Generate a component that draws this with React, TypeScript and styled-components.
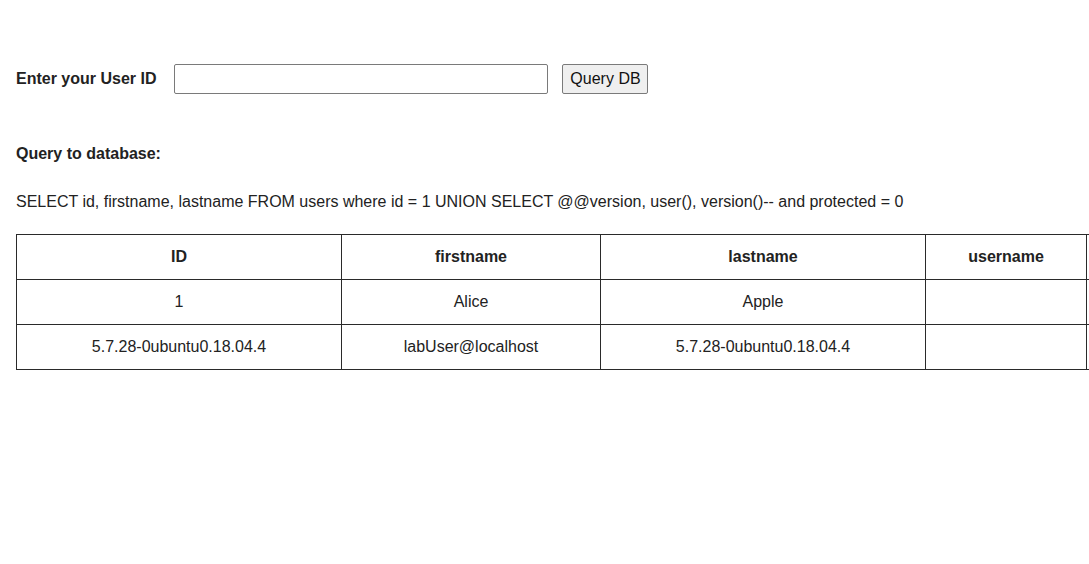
import styled, { createGlobalStyle } from "styled-components";

const GlobalStyle = createGlobalStyle`
  html, body {
    margin: 0;
    padding: 0;
    overflow: hidden;
    background: #ffffff;
  }
  body {
    font-family: "Liberation Sans", Arial, sans-serif;
    font-size: 16px;
    color: #222222;
  }
`;

const Page = styled.main`
  padding: 64px 0 0 16px;
`;

const Form = styled.form`
  display: flex;
  align-items: center;
  height: 30px;
`;

const Label = styled.label`
  font-weight: bold;
  margin-right: 18px;
`;

const Input = styled.input`
  box-sizing: border-box;
  width: 374px;
  height: 30px;
  border: 1px solid #7a7a7a;
  border-radius: 2px;
  padding: 0 6px;
  font: inherit;
  margin: 0 14px 0 0;
`;

const Button = styled.button`
  box-sizing: border-box;
  width: 86px;
  height: 30px;
  background: #efefef;
  border: 1px solid #7a7a7a;
  border-radius: 2px;
  font-family: "Liberation Sans", Arial, sans-serif;
  font-size: 16px;
  color: #111;
  padding: 0;
`;

const Heading = styled.h4`
  margin: 51px 0 0;
  font-size: 16px;
  line-height: 18px;
  font-weight: bold;
`;

const QueryText = styled.p`
  margin: 30px 0 0;
  line-height: 18px;
`;

const Table = styled.table`
  margin-top: 23px;
  border-collapse: collapse;
  table-layout: fixed;
  width: 1230px;
`;

const Cell = styled.td<{ $head?: boolean }>`
  border: 1px solid #2a2a2a;
  height: 44px;
  padding: 0;
  text-align: center;
  font-weight: ${(p) => (p.$head ? "bold" : "normal")};
`;

// last column is cut off by the window edge in the original page
const columns = [
  { name: "ID", width: 325 },
  { name: "firstname", width: 259 },
  { name: "lastname", width: 325 },
  { name: "username", width: 161 },
  { name: "", width: 160 },
];

const rows = [
  ["1", "Alice", "Apple", "", ""],
  ["5.7.28-0ubuntu0.18.04.4", "labUser@localhost", "5.7.28-0ubuntu0.18.04.4", "", ""],
];

const App = () => {
  return (
    <>
      <GlobalStyle />
      <Page>
        <Form onSubmit={(e) => e.preventDefault()}>
          <Label htmlFor="uid">Enter your User ID</Label>
          <Input id="uid" type="text" />
          <Button type="submit">Query DB</Button>
        </Form>
        <Heading>Query to database:</Heading>
        <QueryText>
          SELECT id, firstname, lastname FROM users where id = 1 UNION SELECT @@version, user(), version()-- and protected = 0
        </QueryText>
        <Table>
          <colgroup>
            {columns.map((c, i) => (
              <col key={i} style={{ width: c.width }} />
            ))}
          </colgroup>
          <thead>
            <tr>
              {columns.map((c, i) => (
                <Cell as="th" $head key={i}>
                  {c.name}
                </Cell>
              ))}
            </tr>
          </thead>
          <tbody>
            {rows.map((r, i) => (
              <tr key={i}>
                {r.map((v, j) => (
                  <Cell key={j}>{v}</Cell>
                ))}
              </tr>
            ))}
          </tbody>
        </Table>
      </Page>
    </>
  );
};

export default App;
